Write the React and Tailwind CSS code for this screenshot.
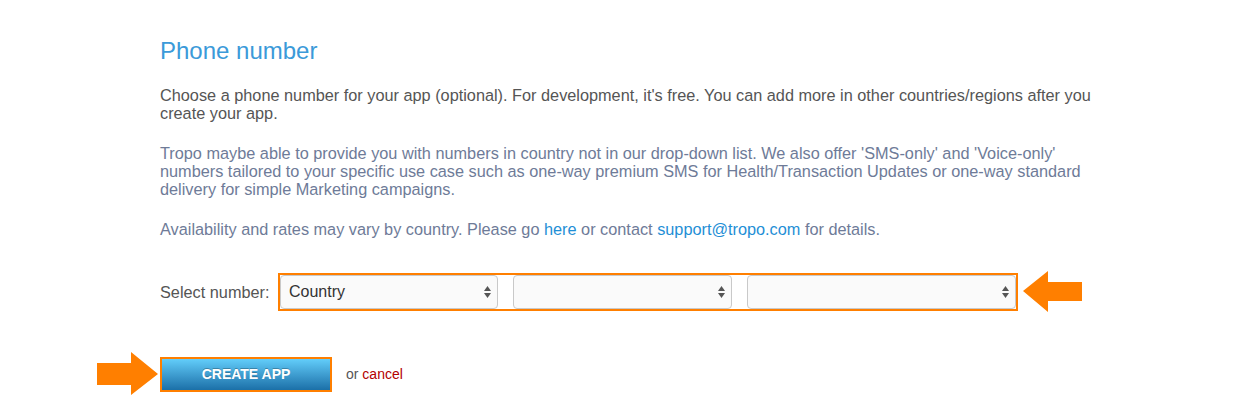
import React from 'react';

function SelectBox({ label, className }) {
  return (
    <div className={`relative h-[34px] bg-[#fafafa] border border-[#c9c9c9] rounded-[4px] flex items-center pl-[8px] text-[16px] text-[#333] ${className}`}>
      <span>{label}</span>
      <svg className="absolute right-[5px] top-1/2 -translate-y-1/2" width="9" height="14" viewBox="0 0 9 14">
        <path d="M4.5 1 L8 6 L1 6 Z" fill="#555" />
        <path d="M4.5 13 L8 8 L1 8 Z" fill="#555" />
      </svg>
    </div>
  );
}

function ArrowLeft() {
  return (
    <svg width="60" height="42" viewBox="0 0 60 42">
      <path d="M0 20 L25 0 L25 11 L59 11 L59 30 L25 30 L25 41 Z" fill="#ff7f00" />
    </svg>
  );
}

function ArrowRight() {
  return (
    <svg width="62" height="44" viewBox="0 0 62 44">
      <path d="M0 11 L34 11 L34 0 L61 22 L34 43 L34 33 L0 33 Z" fill="#ff7f00" />
    </svg>
  );
}

export default function App() {
  return (
    <div className="min-h-[420px] bg-white font-['Liberation_Sans',Arial,sans-serif]">
      <div className="pl-[160px] pt-[37px] w-[1100px]">
        <h2 className="text-[24px] leading-[28px] text-[#3b9ad9] mb-[21px]">Phone number</h2>
        <p className="text-[16.3px] leading-[18px] text-[#555] mb-[22px]">
          Choose a phone number for your app (optional). For development, it's free. You can add more in other countries/regions after you create your app.
        </p>
        <p className="text-[16.3px] leading-[18px] text-[#6e7b98] mb-[22px]">
          Tropo maybe able to provide you with numbers in country not in our drop-down list. We also offer 'SMS-only' and 'Voice-only' numbers tailored to your specific use case such as one-way premium SMS for Health/Transaction Updates or one-way standard delivery for simple Marketing campaigns.
        </p>
        <p className="text-[16.3px] leading-[18px] text-[#6e7b98]">
          Availability and rates may vary by country. Please go <a className="text-[#1f8fd6]">here</a> or contact <a className="text-[#1f8fd6]">support@tropo.com</a> for details.
        </p>
      </div>

      <div className="flex items-center mt-[33px] pl-[160px]">
        <span className="text-[16.3px] text-[#555] w-[118px]">Select number:</span>
        <div className="flex gap-[15px] border-2 border-[#ff7f00]">
          <SelectBox label="Country" className="w-[218px]" />
          <SelectBox label="" className="w-[219px]" />
          <SelectBox label="" className="w-[269px]" />
        </div>
        <div className="ml-[5px]">
          <ArrowLeft />
        </div>
      </div>

      <div className="flex items-center mt-[39px] pl-[97px]">
        <ArrowRight />
        <div className="border-2 border-[#ff7f00] ml-[1px]">
          <button className="w-[168px] h-[31px] bg-gradient-to-b from-[#62cdfa] to-[#1b70a8] text-white font-bold text-[14px] [text-shadow:0_-1px_0_rgba(0,0,0,0.25)]">
            CREATE APP
          </button>
        </div>
        <span className="ml-[14px] text-[14px] text-[#555]">
          or <a className="text-[#b30000]">cancel</a>
        </span>
      </div>
    </div>
  );
}
